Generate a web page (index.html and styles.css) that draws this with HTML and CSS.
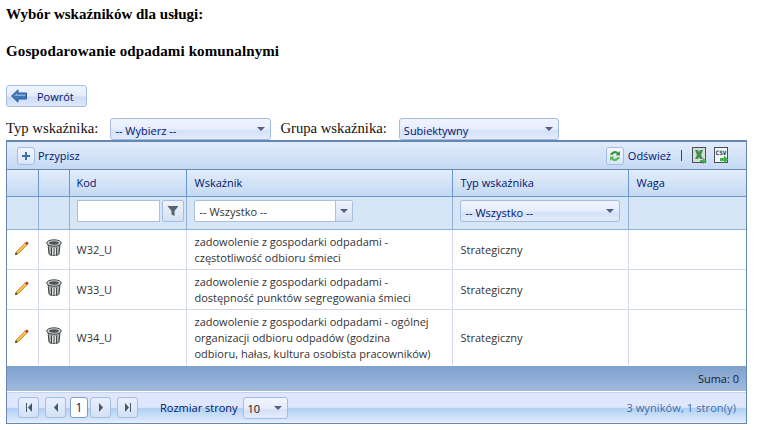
FILE: index.html
```html
<!DOCTYPE html>
<html lang="pl">
<head>
    <meta charset="UTF-8">
    <title>Wybór wskaźników</title>
    <link rel="stylesheet" href="styles.css">
</head>
<body>
    <h4 class="page-title">Wybór wskaźników dla usługi:</h4>
    <h4 class="page-title service">Gospodarowanie odpadami komunalnymi</h4>

    <button class="back-btn" type="button">
        <svg width="16" height="14" viewBox="0 0 16 14"><path d="M.5 7 7 .800V4h8.500v6H7v3.200z" fill="#3f78b8" stroke="#2a5c9c"/><path d="M3 7 6 4.200V5.500h8.500V7z" fill="#86aedb"/></svg>
        <span>Powrót</span>
    </button>

    <div class="filters">
        <label>Typ wskaźnika:</label>
        <div class="combo combo-typ"><span>-- Wybierz --</span><i class="arrow"></i></div>
        <label>Grupa wskaźnika:</label>
        <div class="combo combo-grupa"><span>Subiektywny</span><i class="arrow"></i></div>
    </div>

    <div class="grid">
        <div class="toolbar">
            <a class="tool tool-add">
                <span class="tool-icon"><svg width="10" height="10" viewBox="0 0 10 10"><path d="M5 1v8M1 5h8" stroke="#3b6fb0" stroke-width="2"/></svg></span>
                Przypisz
            </a>
            <div class="tool-right">
                <a class="tool">
                    <span class="tool-icon"><svg width="14" height="14" viewBox="0 0 14 14"><path d="M2 6a5 5 0 0 1 8.500-2.500L12 2v4.500H7.500L9 5a3 3 0 0 0-4.500 1z" fill="#3a9a3a"/><path d="M12 8a5 5 0 0 1-8.500 2.500L2 12V7.500h4.500L5 9a3 3 0 0 0 4.500-1z" fill="#5cb85c"/></svg></span>
                    Odśwież
                </a>
                <span class="sep"></span>
                <svg class="export" width="15" height="17" viewBox="0 0 15 17"><rect x=".5" y=".5" width="13" height="15" fill="#d8dcd8" stroke="#44505c"/><path d="M3 3h3l1 2 1-2h3L9 8l2 4H8L7 10l-1 2H3l2-4z" fill="#3f8f4f"/><path d="M8 13h3v-2l4 3-4 3v-2H8z" fill="#43b04a"/></svg>
                <svg class="export" width="15" height="17" viewBox="0 0 15 17"><rect x=".5" y=".5" width="13" height="15" fill="#f4f6f8" stroke="#44505c"/><text class="csv" x="7" y="7.500" text-anchor="middle">CSV</text><path d="M6 11h4V8.500l4.500 4-4.500 4V14H6z" fill="#43b04a"/></svg>
            </div>
        </div>

        <table class="data">
            <colgroup>
                <col class="c-edit"><col class="c-del"><col class="c-kod"><col class="c-name"><col class="c-typ"><col>
            </colgroup>
            <thead>
                <tr class="head">
                    <th></th><th></th><th>Kod</th><th>Wskaźnik</th><th>Typ wskaźnika</th><th>Waga</th>
                </tr>
                <tr class="filter">
                    <td></td>
                    <td></td>
                    <td class="kod-filter">
                        <div class="cell-row">
                            <div class="text-box"></div>
                            <span class="filter-btn"><svg width="12" height="12" viewBox="0 0 12 12"><path d="M.5 1h11L7.500 6v5l-3-1.500V6z" fill="#59636e"/></svg></span>
                        </div>
                    </td>
                    <td>
                        <div class="drop"><span>-- Wszystko --</span><span class="drop-btn"><i class="arrow"></i></span></div>
                    </td>
                    <td>
                        <div class="combo combo-filter"><span>-- Wszystko --</span><i class="arrow"></i></div>
                    </td>
                    <td></td>
                </tr>
            </thead>
            <tbody>
                <tr class="r1">
                    <td class="ic"><svg width="16" height="16" viewBox="0 0 16 16"><use href="#pencil"/></svg></td>
                    <td class="ic"><svg width="16" height="18" viewBox="0 0 16 18"><use href="#bin"/></svg></td>
                    <td>W32_U</td>
                    <td>zadowolenie z gospodarki odpadami -<br>częstotliwość odbioru śmieci</td>
                    <td>Strategiczny</td>
                    <td></td>
                </tr>
                <tr class="r1">
                    <td class="ic"><svg width="16" height="16" viewBox="0 0 16 16"><use href="#pencil"/></svg></td>
                    <td class="ic"><svg width="16" height="18" viewBox="0 0 16 18"><use href="#bin"/></svg></td>
                    <td>W33_U</td>
                    <td>zadowolenie z gospodarki odpadami -<br>dostępność punktów segregowania śmieci</td>
                    <td>Strategiczny</td>
                    <td></td>
                </tr>
                <tr class="r2">
                    <td class="ic"><svg width="16" height="16" viewBox="0 0 16 16"><use href="#pencil"/></svg></td>
                    <td class="ic"><svg width="16" height="18" viewBox="0 0 16 18"><use href="#bin"/></svg></td>
                    <td>W34_U</td>
                    <td>zadowolenie z gospodarki odpadami - ogólnej<br>organizacji odbioru odpadów (godzina<br>odbioru, hałas, kultura osobista pracowników)</td>
                    <td>Strategiczny</td>
                    <td></td>
                </tr>
            </tbody>
        </table>

        <div class="sum">Suma: 0</div>

        <div class="pager">
            <div class="pager-btns">
                <span class="pg"><svg width="8" height="9" viewBox="0 0 8 9"><path d="M1 0h1v9H1zM7 0v9L3 4.500z" fill="#44586c"/></svg></span>
                <span class="pg gap"><svg width="8" height="9" viewBox="0 0 8 9"><path d="M6 0v9L2 4.500z" fill="#44586c"/></svg></span>
                <span class="pg current">1</span>
                <span class="pg"><svg width="8" height="9" viewBox="0 0 8 9"><path d="M2 0v9l4-4.500z" fill="#44586c"/></svg></span>
                <span class="pg gap"><svg width="8" height="9" viewBox="0 0 8 9"><path d="M7 0H6v9h1zM1 0v9l4-4.500z" fill="#44586c"/></svg></span>
            </div>
            <span class="page-size">Rozmiar strony</span>
            <div class="combo combo-size"><span>10</span><i class="arrow"></i></div>
            <span class="results">3 wyników, 1 stron(y)</span>
        </div>
    </div>

    <svg class="defs" width="0" height="0">
        <defs>
            <g id="pencil">
                <path d="M2.500 11.500 11 3l2 2-8.500 8.500-2.800.800z" fill="#f2b632" stroke="#a8701c" stroke-width=".6"/>
                <path d="M4 11.500 11.500 4" stroke="#fbe08a" stroke-width=".8"/>
                <path d="M11 3l1.200-1.200h1.300l.9.900v1.300L13 5z" fill="#c8323c"/>
                <path d="M1 15l.7-2.800 2.100 2.100z" fill="#3a3028"/>
            </g>
            <g id="bin">
                <path d="M2 5l1 10c.5 2 9.500 2 10 0l1-10z" fill="#a8acac" stroke="#3c4042"/>
                <ellipse cx="8" cy="4" rx="7.300" ry="3.200" fill="#d0d4d4" stroke="#44484a"/>
                <ellipse cx="8" cy="4" rx="4.800" ry="1.700" fill="#4c5052"/>
                <path d="M5.500 8.500v7.500M8 9v8M10.500 8.500v7.500" stroke="#44484a"/>
                <path d="M6.800 9v7.500M9.300 9v7.500" stroke="#eef0f0"/>
            </g>
        </defs>
    </svg>
</body>
</html>
```

FILE: styles.css
```css
:root {
    --text-blue: #00156e;
    --border-dark: #6788b2;
    --border-head: #6a98cc;
    --border-soft: #8fb1d6;
    --row-line: #d3d8ec;
    --filter-bg: #d6e6f6;
}

* {
    box-sizing: border-box;
}

body {
    margin: 0;
    padding: 0 6px;
    width: 773px;
    height: 430px;
    overflow: hidden;
    background: #fff;
    font-family: "Open Sans", "Liberation Sans", sans-serif;
    font-size: 11px;
    color: #222;
}

.page-title {
    margin: 0;
    padding-top: 6px;
    height: 22px;
    font-family: "Liberation Serif", serif;
    font-size: 15px;
    font-weight: bold;
    line-height: 16px;
    color: #000;
}

.service {
    margin-top: 15px;
    letter-spacing: .12px;
}

.back-btn {
    display: flex;
    align-items: center;
    gap: 10px;
    margin: 26px 0 0;
    padding: 0 0 0 4px;
    width: 81px;
    height: 22px;
    border: 1px solid #a3bde3;
    border-radius: 3px;
    background: linear-gradient(#f0f5fe 0%, #e4ecfb 50%, #cddcf5 55%, #dde8fa 100%);
    font: 11px "Open Sans", sans-serif;
    color: var(--text-blue);
}

.filters {
    display: flex;
    align-items: center;
    height: 22px;
    margin-top: 11px;
    font-family: "Liberation Serif", serif;
    font-size: 14.700px;
    color: #111;
}

.filters label {
    margin-top: -2px;
}

.combo {
    position: relative;
    display: flex;
    align-items: center;
    height: 22px;
    padding: 2px 0 0 4px;
    border: 1px solid #a3bde3;
    border-radius: 3px;
    background: linear-gradient(#f0f4fe 0%, #e6edfc 50%, #d4e1f8 60%, #e4ecfb 100%);
    font-family: "Open Sans", sans-serif;
    font-size: 11px;
    color: var(--text-blue);
}

.arrow {
    width: 0;
    height: 0;
    border-left: 4px solid transparent;
    border-right: 4px solid transparent;
    border-top: 4px solid #4f5f88;
}

.combo .arrow {
    position: absolute;
    right: 5px;
    top: 8px;
}

.combo-typ {
    width: 161px;
    margin: 0 9px 0 12px;
}

.combo-grupa {
    width: 160px;
    margin-left: 12px;
}

.grid {
    width: 741px;
    height: 284px;
    border: 1px solid var(--border-dark);
    border-top-width: 2px;
    background: #fff;
}

.toolbar {
    display: flex;
    align-items: center;
    justify-content: space-between;
    height: 28px;
    padding: 0 10px;
    border-bottom: 1px solid var(--border-dark);
    background: linear-gradient(#e2ecfb, #c5d9f3);
    color: var(--text-blue);
}

.tool {
    display: flex;
    align-items: center;
    gap: 4px;
}

.tool-add {
    gap: 3px;
}

.tool-icon {
    display: flex;
    align-items: center;
    justify-content: center;
    width: 18px;
    height: 18px;
    border: 1px solid #a3bde3;
    border-radius: 3px;
    background: linear-gradient(#f2f6fe, #d8e5f8);
}

.tool-right {
    display: flex;
    align-items: center;
}

.sep {
    width: 1px;
    height: 11px;
    margin: 0 10px;
    background: #32456c;
}

.export {
    margin-right: 7px;
}

.csv {
    font-family: "DejaVu Sans Mono", monospace;
    font-size: 6px;
    font-weight: bold;
    fill: #20303c;
}

.data {
    width: 739px;
    border-collapse: collapse;
    table-layout: fixed;
}

.c-edit { width: 31px; }
.c-del { width: 31px; }
.c-kod { width: 117px; }
.c-name { width: 266px; }
.c-typ { width: 176px; }

.head th {
    height: 26px;
    padding: 0 0 0 7px;
    border-left: 1px solid var(--border-head);
    border-bottom: 1px solid var(--border-head);
    background: linear-gradient(#e3edfb, #c4d9f3);
    font-weight: normal;
    text-align: left;
    color: var(--text-blue);
}

.head th:nth-child(n+4) {
    padding-left: 8px;
}

.head th:first-child,
.filter td:first-child,
tbody td:first-child {
    border-left: 0;
}

.filter td {
    height: 33px;
    padding: 0 7px 3px;
    border-left: 1px solid var(--border-soft);
    border-bottom: 1px solid var(--border-soft);
    background: var(--filter-bg);
}

.filter .kod-filter {
    padding: 0 1px 3px 7px;
}

.filter .combo {
    padding-left: 5px;
}

.cell-row {
    display: flex;
    gap: 2px;
}

.text-box {
    width: 83px;
    height: 22px;
    border: 1px solid #a9c0de;
    background: #fff;
}

.filter-btn {
    display: flex;
    align-items: center;
    justify-content: center;
    width: 22px;
    height: 22px;
    border: 1px solid #a3bde3;
    border-radius: 2px;
    background: linear-gradient(#eef3fb, #d5e1f2);
}

.drop {
    display: flex;
    align-items: center;
    justify-content: space-between;
    width: 159px;
    height: 22px;
    padding-left: 5px;
    border: 1px solid #a9c0de;
    border-radius: 2px;
    background: #fff;
    color: #333;
}

.drop-btn {
    display: flex;
    align-items: center;
    justify-content: center;
    width: 17px;
    height: 20px;
    border-left: 1px solid #a9c0de;
    background: linear-gradient(#eef3fb, #d5e1f2);
}

.combo-filter {
    width: 160px;
}

tbody td {
    padding: 2px 7px 0;
    border-left: 1px solid var(--row-line);
    border-bottom: 1px solid var(--row-line);
    line-height: 16px;
    color: #333;
}

tbody td:nth-child(n+4) {
    padding-left: 8px;
}

.r1 td { height: 40px; }
.r2 td { height: 56px; border-bottom: 1px solid #fff; }

tbody td.ic {
    padding: 0 0 2px;
    text-align: center;
}

td.ic svg {
    display: block;
    margin: 0 auto;
}

.sum {
    height: 25px;
    padding: 5px 7px 0 0;
    background: linear-gradient(#7ea1cf, #a0b9dd);
    text-align: right;
    color: #222;
}

.pager {
    display: flex;
    align-items: center;
    height: 31px;
    margin-top: 1px;
    padding: 0 10px 0 11px;
    background: linear-gradient(#dfe7fd 0%, #dfe7fd 48%, #afd0f3 50%, #d8e6fa 90%, #e8f0fd 100%);
    border-top: 1px solid #c5d5ee;
    color: var(--text-blue);
}

.pager-btns {
    display: flex;
    gap: 3px;
}

.pg {
    display: flex;
    align-items: center;
    justify-content: center;
    width: 21px;
    height: 21px;
    border: 1px solid #a3bde3;
    border-radius: 3px;
    background: linear-gradient(#eaf0fd, #d3e1f6);
}

.pg.gap {
    margin-left: 3px;
}

.pg.current {
    width: 18px;
    margin: 0 -1px 0 1px;
    border-color: #7f9cc4;
    background: #fff;
    font-size: 12px;
}

.page-size {
    margin-left: 22px;
}

.combo-size {
    width: 45px;
    margin-left: 5px;
    color: #111;
}

.results {
    margin-left: auto;
    color: #3f6da8;
    letter-spacing: .1px;
}

.defs {
    position: absolute;
}
```
